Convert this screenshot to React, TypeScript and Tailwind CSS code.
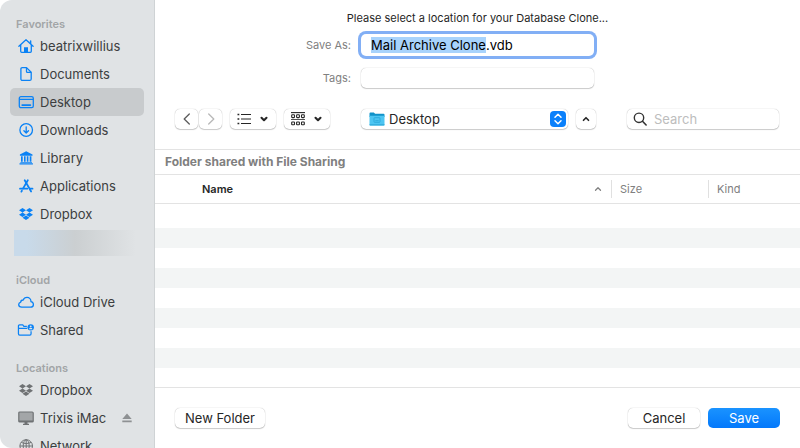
import React, { ReactNode, useEffect, useRef, useState } from "react";
import { ChevronDown, ChevronUp } from "lucide-react";
import { FaDropbox } from "react-icons/fa";

const HomeIcon = () => (
  <svg viewBox="0 0 16 16" className="w-4 h-4" fill="none" stroke="currentColor" strokeWidth="1.3" strokeLinejoin="round" strokeLinecap="round">
    <path d="M.9 8.3 8 1.8l7.1 6.5M2.7 7v6.3c0 .6.4 1 1 1h8.6c.6 0 1-.4 1-1V7" />
    <path d="M12.6 5.6V3" strokeWidth="1.5" />
    <path d="M6 14V9.2h4V14z" fill="currentColor" stroke="none" />
  </svg>
);

const DocumentIcon = () => (
  <svg viewBox="0 0 16 16" className="w-4 h-4" fill="none" stroke="currentColor" strokeWidth="1.3" strokeLinejoin="round">
    <path d="M4.2 1.6h4.3l4.7 4.7v6.6c0 .9-.6 1.5-1.5 1.5H4.400c-.9 0-1.500-.6-1.500-1.500V3.100c0-.9.500-1.500 1.300-1.500Z" />
    <path d="M8.5 1.8v3.6c0 .6.4 1 1 1h3.600" />
  </svg>
);

const DesktopIcon = () => (
  <svg viewBox="0 0 16 16" className="w-4 h-4" fill="none" stroke="currentColor" strokeWidth="1.3">
    <rect x="1.3" y="2.7" width="14" height="11" rx="1.6" />
    <path d="M1.3 5.3h14" />
    <rect x="3.4" y="10.2" width="9.8" height="1.9" rx=".8" fill="currentColor" stroke="none" />
  </svg>
);

const DownloadIcon = () => (
  <svg viewBox="0 0 16 16" className="w-4 h-4" fill="none" stroke="currentColor" strokeWidth="1.3" strokeLinecap="round" strokeLinejoin="round">
    <circle cx="8.2" cy="8" r="6.3" />
    <path d="M8.2 4.8v6M5.9 8.700l2.300 2.300 2.300-2.300" />
  </svg>
);

const LibraryIcon = () => (
  <svg viewBox="0 0 16 16" className="w-4 h-4" fill="currentColor">
    <path d="M8.2 1.2 1.9 4.5v1.2h12.6V4.5z" />
    <path d="M3 6.3h1.700v5.4H3zM6 6.3h1.6v5.4H6zM8.8 6.3h1.6v5.4H8.8zM11.700 6.3h1.700v5.4h-1.700zM2.400 11.9h11.600v.9H2.400zM1.500 13.2h13.400v1.200H1.500z" />
  </svg>
);

const ApplicationsIcon = () => (
  <svg viewBox="0 0 16 16" className="w-4 h-4" fill="none" stroke="currentColor" strokeWidth="1.8" strokeLinecap="round">
    <path d="M9.8 2.3 5 10.6" />
    <path d="m6.7 2.3 6.4 11.2" />
    <path d="M2 10.7h7.2M11.9 10.7h2.6M3.9 12.7l-.5.9" />
  </svg>
);

const DropboxIcon = () => <FaDropbox className="w-3.5 h-3.5 mx-px" />;

const CloudIcon = () => (
  <svg viewBox="0 0 16 16" className="w-4 h-4" fill="none" stroke="currentColor" strokeWidth="1.3" strokeLinejoin="round">
    <path d="M3.8 13.1h8.7c1.7 0 2.9-1.1 2.9-2.7 0-1.5-1-2.5-2.4-2.7 0-2.4-1.7-4.3-4-4.3-1.8 0-3.2 1-3.8 2.6-1.5-.1-2.4.9-2.5 2.1C1.5 8.5.7 9.4.7 10.5c0 1.5 1.3 2.6 3.1 2.6Z" />
  </svg>
);

const SharedIcon = () => (
  <svg viewBox="0 0 18 16" className="w-4 h-4 overflow-visible" fill="none" stroke="currentColor" strokeWidth="1.4" strokeLinejoin="round">
    <path d="M10 3.8H6.6L5.4 2.3H1.8C1 2.3.5 2.8.5 3.6v8.7c0 .9.5 1.4 1.4 1.4h11.4c.9 0 1.4-.5 1.4-1.4V9.500" />
    <path d="M.5 6.2h9.8" />
    <circle cx="14.3" cy="5" r="3.6" fill="currentColor" stroke="none" />
    <circle cx="14.3" cy="3.9" r="1.1" fill="#e0e3e5" stroke="none" />
    <path d="M12.4 7.2c.2-1.3.9-1.8 1.9-1.8s1.7.5 1.9 1.8z" fill="#e0e3e5" stroke="none" />
  </svg>
);

const ComputerIcon = () => (
  <svg viewBox="0 0 16 16" className="w-4 h-4" fill="none" stroke="currentColor" strokeWidth="1.2">
    <rect x=".8" y="2" width="14.4" height="10" rx="1" fill="#a3a6a8" />
    <path d="M.8 11.3h14.4" strokeWidth="1.5" />
    <path d="M6.5 12h3v2h-3z" fill="currentColor" stroke="none" />
    <path d="M5 14.3h6" />
  </svg>
);

const NetworkIcon = () => (
  <svg viewBox="0 0 16 16" className="w-4 h-4" fill="none" stroke="currentColor" strokeWidth="1">
    <circle cx="8.2" cy="8" r="6.3" />
    <ellipse cx="8.2" cy="8" rx="3" ry="6.3" />
    <path d="M8.2 1.7v12.6M1.9 8h12.6M3.3 4.4c2.8 1.5 7 1.5 9.8 0M3.3 11.6c2.8-1.5 7-1.5 9.8 0" />
  </svg>
);

const EjectIcon = () => (
  <svg viewBox="0 0 10 10" className="w-2.5 h-2.5" fill="currentColor">
    <path d="M5 .5 9.7 6H.3zM.3 7.4h9.4v1.8H.3z" />
  </svg>
);

const BackIcon = () => (
  <svg viewBox="0 0 8 12" className="w-2 h-3" fill="none" stroke="#5c5c5c" strokeWidth="1.3" strokeLinecap="round" strokeLinejoin="round">
    <path d="M6.3 1 1.2 6l5.100 5" />
  </svg>
);

const ForwardIcon = () => (
  <svg viewBox="0 0 8 12" className="w-2 h-3" fill="none" stroke="#b8b8b8" strokeWidth="1.3" strokeLinecap="round" strokeLinejoin="round">
    <path d="m1.700 1 5.100 5-5.100 5" />
  </svg>
);

const ListIcon = () => (
  <svg viewBox="0 0 14 12" className="w-3.5 h-3" fill="none" stroke="currentColor" strokeWidth="1.2">
    <path d="M4 1.500h10M4 6h10M4 10.500h10" />
    <path d="M.5 1.500h1.800M.5 6h1.800M.5 10.500h1.800" strokeWidth="1.5" />
  </svg>
);

const GroupIcon = () => (
  <svg viewBox="0 0 14 14" className="w-3.5 h-3.5" fill="none" stroke="currentColor" strokeWidth="1.1">
    <path d="M0 .6h14" />
    <path d="M0 7.500h14" strokeWidth=".8" />
    <rect x=".7" y="2.800" width="2.8" height="2.8" rx=".6" />
    <rect x="5.6" y="2.800" width="2.8" height="2.8" rx=".6" />
    <rect x="10.5" y="2.800" width="2.8" height="2.8" rx=".6" />
    <rect x=".7" y="10" width="2.8" height="2.8" rx=".6" />
    <rect x="5.6" y="10" width="2.8" height="2.8" rx=".6" />
    <rect x="10.5" y="10" width="2.8" height="2.8" rx=".6" />
  </svg>
);

const FolderIcon = () => (
  <svg viewBox="0 0 16 14" className="w-4 h-3.5 shrink-0">
    <path d="M.5 1.5c0-.6.3-.9.9-.9h3.4l1.300 1.200h8.500c.6 0 .9.3.9.9V5H.5z" fill="#1192c9" />
    <path d="M.5 3.7h15v8.900c0 .6-.3.9-.9.9H1.400c-.6 0-.9-.3-.9-.9z" fill="#4dc5f2" />
    <path d="M.5 12.2h15v.5c0 .6-.3.9-.9.9H1.400c-.6 0-.9-.3-.9-.9z" fill="#2fa9da" />
    <rect x="5" y="5.7" width="6" height="4.6" rx=".6" fill="none" stroke="#27a5d8" strokeWidth=".8" />
    <path d="M6.3 8.7h3.4" stroke="#27a5d8" strokeWidth=".8" />
  </svg>
);

const UpDownIcon = () => (
  <svg viewBox="0 0 16 16" className="w-4 h-4 shrink-0">
    <rect width="16" height="16" rx="4" fill="#0a80fb" />
    <path d="m5 6.2 3-2.9 3 2.9M5 9.8l3 2.9 3-2.9" fill="none" stroke="#fff" strokeWidth="1.5" strokeLinecap="round" strokeLinejoin="round" />
  </svg>
);

const SearchIcon = () => (
  <svg viewBox="0 0 14 14" className="w-3.5 h-3.5 shrink-0" fill="none" stroke="#333" strokeWidth="1.4" strokeLinecap="round">
    <circle cx="6" cy="5.8" r="4.7" />
    <path d="m9.5 9.3 3.6 3.7" strokeWidth="1.6" />
  </svg>
);

interface Place {
  name: string;
  icon: ReactNode;
  ejectable?: boolean;
}

const favorites: Place[] = [
  { name: "beatrixwillius", icon: <HomeIcon /> },
  { name: "Documents", icon: <DocumentIcon /> },
  { name: "Desktop", icon: <DesktopIcon /> },
  { name: "Downloads", icon: <DownloadIcon /> },
  { name: "Library", icon: <LibraryIcon /> },
  { name: "Applications", icon: <ApplicationsIcon /> },
  { name: "Dropbox", icon: <DropboxIcon /> },
];

const icloud: Place[] = [
  { name: "iCloud Drive", icon: <CloudIcon /> },
  { name: "Shared", icon: <SharedIcon /> },
];

const locations: Place[] = [
  { name: "Dropbox", icon: <DropboxIcon /> },
  { name: "Trixis iMac", icon: <ComputerIcon />, ejectable: true },
  { name: "Network", icon: <NetworkIcon /> },
];

const control =
  "rounded-[5px] bg-white shadow-[0_0_1px_rgba(0,0,0,0.35),0_1px_1px_rgba(0,0,0,0.18)]";

interface SectionProps {
  title: string;
  places: Place[];
  color: string;
  selected?: string;
  children?: ReactNode;
}

function Section({ title, places, color, selected, children }: SectionProps) {
  return (
    <section>
      <h2 className="pl-1.5 h-4 text-[11px] leading-4 font-semibold text-[#a2a5a7]">
        {title}
      </h2>
      <ul>
        {places.map((place) => (
          <li
            key={place.name}
            className={`flex items-center h-7 pl-2 pr-3 rounded-[5px] ${
              selected === place.name ? "bg-[#c8cbcd]" : ""
            }`}
          >
            <a href="#" className="flex-1 flex items-center gap-1.5 text-[13px] leading-4 text-[#3c3e40]">
              <span className={color}>{place.icon}</span>
              {place.name}
            </a>
            {place.ejectable && (
              <button type="button" aria-label="Eject" className="text-[#8e9193]">
                <EjectIcon />
              </button>
            )}
          </li>
        ))}
      </ul>
      {children}
    </section>
  );
}

export default function App() {
  const [fileName, setFileName] = useState<string>("Mail Archive Clone.vdb");
  const [tags, setTags] = useState<string>("");
  const [search, setSearch] = useState<string>("");
  const nameRef = useRef<HTMLInputElement>(null);

  // Select the name without its extension, as the Finder does
  useEffect(() => {
    const input = nameRef.current;
    if (!input) return;
    input.focus();
    input.setSelectionRange(0, input.value.lastIndexOf("."));
  }, []);

  return (
    <div className="flex h-screen overflow-hidden bg-white font-[Inter,'Liberation_Sans',sans-serif] text-[13px] leading-4 text-[#262626]">
      <nav className="w-[155px] shrink-0 flex flex-col gap-4 pt-4 px-2.5 overflow-hidden rounded-l-xl bg-[#e0e3e5] border-r border-[#cfd3d5]">
        <Section title="Favorites" places={favorites} color="text-[#0a82f5]" selected="Desktop">
          <div className="h-7 pt-0.5 pl-1 pr-2">
            <div className="h-full bg-linear-to-r from-[#c8daea] from-10% via-[#cbcfd1] via-50% to-[#e0e3e5]" />
          </div>
        </Section>
        <Section title="iCloud" places={icloud} color="text-[#0a82f5]" />
        <Section title="Locations" places={locations} color="text-[#6f7274]" />
      </nav>

      <main className="flex-1 min-w-0 flex flex-col">
        <form className="pt-2.5">
          <p className="text-center text-[11px] leading-4">
            Please select a location for your Database Clone...
          </p>
          <div className="mt-2 grid grid-cols-[1fr_233px_1fr] items-center gap-x-2.5 gap-y-3">
            <label htmlFor="fileName" className="text-right text-[11px] text-[#808080]">
              Save As:
            </label>
            <input
              id="fileName"
              ref={nameRef}
              type="text"
              value={fileName}
              onChange={(e) => setFileName(e.target.value)}
              className="h-[22px] px-2.5 rounded-[5px] bg-white text-black outline-none focus:ring-3 focus:ring-[#82aff5] selection:bg-[#a8d3fc] selection:text-black"
            />
            <span />
            <label htmlFor="tags" className="text-right text-[11px] text-[#808080]">
              Tags:
            </label>
            <input
              id="tags"
              type="text"
              value={tags}
              onChange={(e) => setTags(e.target.value)}
              className={`h-5 px-2.5 outline-none ${control}`}
            />
          </div>
        </form>

        <div className="flex items-center justify-between pl-5 pr-[21px] pt-[21px] pb-5">
          <div className="flex gap-2">
            <div className="flex gap-px">
              <button type="button" aria-label="Back" className={`w-[23px] h-5 flex items-center justify-center ${control}`}>
                <BackIcon />
              </button>
              <button type="button" aria-label="Forward" className={`w-[23px] h-5 flex items-center justify-center ${control}`}>
                <ForwardIcon />
              </button>
            </div>
            <button type="button" aria-label="View as list" className={`w-[46px] h-5 flex items-center justify-center gap-2 ${control}`}>
              <ListIcon />
              <ChevronDown className="w-2.5 h-2.5" strokeWidth={5} />
            </button>
            <button type="button" aria-label="Group items" className={`w-[46px] h-5 flex items-center justify-center gap-2 ${control}`}>
              <GroupIcon />
              <ChevronDown className="w-2.5 h-2.5" strokeWidth={5} />
            </button>
          </div>

          <div className="flex gap-2">
            <div className={`w-[207px] h-5 flex items-center gap-1 pl-2 pr-0.5 ${control}`}>
              <FolderIcon />
              <select aria-label="Location" className="flex-1 min-w-0 appearance-none bg-transparent outline-none">
                <option>Desktop</option>
                <option>Documents</option>
                <option>Downloads</option>
              </select>
              <UpDownIcon />
            </div>
            <button type="button" aria-label="Collapse" className={`w-5 h-5 flex items-center justify-center ${control}`}>
              <ChevronUp className="w-2.5 h-2.5" strokeWidth={4} />
            </button>
          </div>

          <label className={`w-[152px] h-5 flex items-center gap-[7px] px-1.5 ${control}`}>
            <SearchIcon />
            <input
              type="text"
              aria-label="Search"
              placeholder="Search"
              value={search}
              onChange={(e) => setSearch(e.target.value)}
              className="flex-1 min-w-0 outline-none placeholder:text-[#bdbdbd]"
            />
          </label>
        </div>

        <p className="h-[26px] pl-2.5 border-y border-[#e3e3e3] text-xs leading-6 font-bold text-[#808080]">
          Folder shared with File Sharing
        </p>

        <div className="flex-1 min-h-0 overflow-hidden">
          <table className="w-full table-fixed text-left text-[11px]">
            <thead>
              <tr className="h-7 border-b border-[#e3e3e3]">
                <th className="pl-[47px] font-semibold">
                  <div className="flex items-center justify-between h-[18px] pr-2 border-r border-[#e0e0e0]">
                    Name
                    <ChevronUp className="w-2.5 h-2.5 text-[#808080]" strokeWidth={3} />
                  </div>
                </th>
                <th className="w-[97px] font-normal text-[#808080]">
                  <div className="h-[18px] pl-2 leading-[18px] border-r border-[#e0e0e0]">Size</div>
                </th>
                <th className="w-[91px] pl-2 font-normal text-[#808080]">Kind</th>
              </tr>
            </thead>
            <tbody>
              <tr className="h-[5px]">
                <td colSpan={3} />
              </tr>
              {Array.from({ length: 9 }, (_, i) => (
                <tr key={i} className={`h-5 ${i % 2 ? "bg-[#f3f5f5]" : ""}`}>
                  <td colSpan={3} />
                </tr>
              ))}
            </tbody>
          </table>
        </div>

        <footer className="flex items-center gap-2 h-[61px] px-5 border-t border-[#e3e3e3]">
          <button type="button" className={`w-[90px] h-5 mr-auto ${control}`}>
            New Folder
          </button>
          <button type="button" className={`w-[72px] h-5 ${control}`}>
            Cancel
          </button>
          <button type="button" className="w-[72px] h-5 rounded-[5px] bg-linear-to-b from-[#1a93ff] to-[#0478fb] text-white">
            Save
          </button>
        </footer>
      </main>
    </div>
  );
}
